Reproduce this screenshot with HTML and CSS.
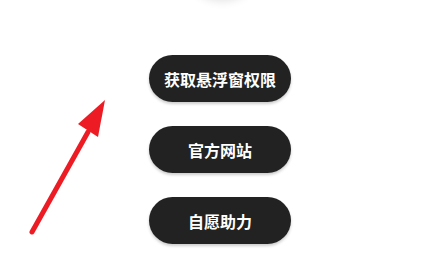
FILE: index.html
```html
<!DOCTYPE html>
<html lang="zh-CN">
<head>
    <meta charset="UTF-8">
    <meta name="viewport" content="width=device-width, initial-scale=1.0">
    <title>悬浮窗</title>
    <link rel="stylesheet" href="styles.css">
</head>
<body>
    <div class="page">
        <div class="avatar"></div>

        <div class="actions">
            <button type="button" class="btn">获取悬浮窗权限</button>
            <button type="button" class="btn">官方网站</button>
            <button type="button" class="btn">自愿助力</button>
        </div>

        <svg class="arrow" width="120" height="150" viewBox="0 0 120 150">
            <line x1="32" y1="132" x2="88" y2="32" stroke="#ed1c24" stroke-width="5" stroke-linecap="round"/>
            <polygon points="105,0 98,37 78,24" fill="#ed1c24"/>
        </svg>
    </div>
</body>
</html>
```

FILE: styles.css
```css
* {
    margin: 0;
    padding: 0;
    box-sizing: border-box;
}

body {
    font-family: "Noto Sans CJK SC", "Noto Sans", sans-serif;
    background-color: #fff;
    width: 447px;
    height: 268px;
    overflow: hidden;
}

.page {
    position: relative;
    height: 268px;
    display: flex;
    flex-direction: column;
    align-items: center;
    padding-right: 7px;
}

.avatar {
    width: 80px;
    height: 80px;
    border-radius: 50%;
    background-color: #fff;
    box-shadow: 0 2px 10px rgba(0, 0, 0, 0.12);
    margin-top: -81px;
    margin-left: 3px;
}

.actions {
    display: flex;
    flex-direction: column;
    gap: 24px;
    margin-top: 56px;
}

.btn {
    width: 142px;
    height: 47px;
    border: none;
    border-radius: 24px;
    background-color: #222;
    color: #fff;
    font-family: inherit;
    font-size: 16px;
    font-weight: 700;
    box-shadow: 0 2px 3px rgba(0, 0, 0, 0.2);
    cursor: pointer;
}

.arrow {
    position: absolute;
    left: 0;
    top: 100px;
}
```
